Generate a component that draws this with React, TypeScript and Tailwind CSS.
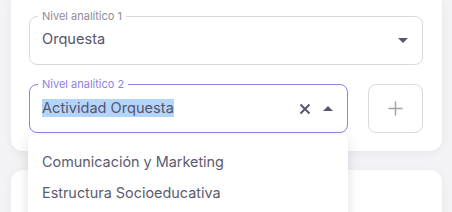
import React from "react";

const font = { fontFamily: "Inter, 'Noto Sans', sans-serif" };

export default function App() {
  return (
    <div className="w-[452px] h-[212px] overflow-hidden bg-[#f3f3f6] relative" style={font}>
      <div className="ml-[11px] w-[431px] bg-white rounded-b-[12px] shadow-[0_2px_8px_rgba(40,40,80,0.06)] px-[18px] pt-[16px] pb-[18px] flex flex-col gap-[19px]">
        {/* Field 1 */}
        <div className="relative h-[49px] w-[394px] border border-[#d9d8de] rounded-[8px] flex items-center pl-[12px] pr-[14px]">
          <span className="absolute -top-[9px] left-[8px] px-[4px] bg-white text-[11px] leading-[16px] text-[#8d8c98]">Nivel analítico 1</span>
          <span className="flex-1 text-[14.6px] text-[#55546a] -mt-[2px]">Orquesta</span>
          <svg width="10" height="5" viewBox="0 0 10 5"><path d="M0 0 L10 0 L5 5 Z" fill="#57566a" /></svg>
        </div>
        {/* Row 2 */}
        <div className="flex gap-[20px]">
          <div className="relative h-[49px] w-[319px] border border-[#8e80e4] rounded-[8px] flex items-center pl-[12px] pr-[14px]">
            <span className="absolute -top-[9px] left-[8px] px-[4px] bg-white text-[11px] leading-[16px] text-[#8e80e4]">Nivel analítico 2</span>
            <span className="flex-1 text-[14.6px] text-[#55546a]"><span className="bg-[#b4d5fb]">Actividad Orquesta</span></span>
            <svg width="12" height="12" viewBox="0 0 12 12" className="mr-[12px]"><path d="M1.5 1.5 L10.5 10.5 M10.5 1.5 L1.5 10.5" stroke="#57566a" strokeWidth="2" /></svg>
            <svg width="10" height="5" viewBox="0 0 10 5"><path d="M0 5 L10 5 L5 0 Z" fill="#57566a" /></svg>
          </div>
          <div className="h-[49px] w-[55px] border border-[#d9d8de] rounded-[8px] flex items-center justify-center">
            <svg width="15" height="15" viewBox="0 0 15 15"><path d="M7.5 0.5 V14.5 M0.5 7.5 H14.5" stroke="#a3a2ad" strokeWidth="1.5" /></svg>
          </div>
        </div>
      </div>
      <div className="ml-[11px] mt-[19px] w-[431px] h-[60px] bg-white rounded-t-[12px] shadow-[0_2px_8px_rgba(40,40,80,0.06)]" />
      {/* Dropdown menu */}
      <div className="absolute left-[28px] top-[135px] w-[320px] h-[100px] bg-white rounded-[6px] shadow-[0_4px_14px_rgba(40,40,80,0.14)] pt-[11px] flex flex-col">
        <div className="h-[31px] flex items-center pl-[14px] text-[14.4px] text-[#5c5b70]">Comunicación y Marketing</div>
        <div className="h-[31px] flex items-center pl-[14px] text-[14.4px] text-[#5c5b70]">Estructura Socioeducativa</div>
      </div>
    </div>
  );
}
